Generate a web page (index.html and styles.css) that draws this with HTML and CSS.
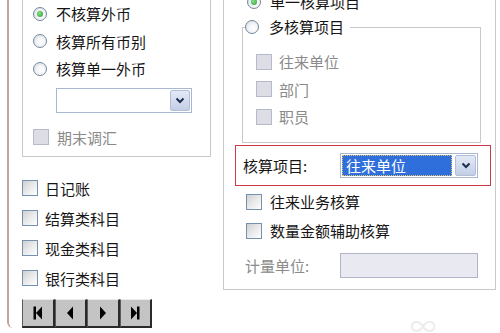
FILE: index.html
```html
<!DOCTYPE html>
<html>
<head>
<meta charset="utf-8">
<link rel="stylesheet" href="styles.css">
</head>
<body>
<div class="frame">
  <div class="left">
    <div class="lbox">
      <div class="opt"><span class="radio on"></span><span>不核算外币</span></div>
      <div class="opt"><span class="radio"></span><span>核算所有币别</span></div>
      <div class="opt"><span class="radio"></span><span>核算单一外币</span></div>
      <div class="select sel-left">
        <span class="field"></span>
        <span class="drop"><svg width="10" height="7" viewBox="0 0 10 7"><path d="M1.5 1.5 L5 5 L8.5 1.5" fill="none" stroke="#1f2f4f" stroke-width="2"/></svg></span>
      </div>
      <div class="crow dis chk-in"><span class="check"></span><span>期末调汇</span></div>
    </div>
    <div class="list">
      <div class="crow"><span class="check"></span><span>日记账</span></div>
      <div class="crow"><span class="check"></span><span>结算类科目</span></div>
      <div class="crow"><span class="check"></span><span>现金类科目</span></div>
      <div class="crow"><span class="check"></span><span>银行类科目</span></div>
    </div>
    <div class="nav">
      <span class="nbtn"><svg width="12" height="14" viewBox="0 0 12 14"><rect x="1.5" y="0.5" width="2.5" height="13" fill="#000"/><path d="M10 0.5 L4 7 L10 13.5 Z" fill="#000"/></svg></span>
      <span class="nbtn"><svg width="12" height="14" viewBox="0 0 12 14"><path d="M9 0.5 L3 7 L9 13.5 Z" fill="#000"/></svg></span>
      <span class="nbtn"><svg width="12" height="14" viewBox="0 0 12 14"><path d="M3 0.5 L9 7 L3 13.5 Z" fill="#000"/></svg></span>
      <span class="nbtn"><svg width="12" height="14" viewBox="0 0 12 14"><path d="M2 0.5 L8 7 L2 13.5 Z" fill="#000"/><rect x="8" y="0.5" width="2.5" height="13" fill="#000"/></svg></span>
    </div>
  </div>
  <div class="right">
    <div class="rbox">
      <div class="opt top"><span class="radio on"></span><span>单一核算项目</span></div>
      <fieldset class="multi">
        <legend><span class="leg"><span class="radio"></span><span>多核算项目</span></span></legend>
        <div class="crow dis in"><span class="check"></span><span>往来单位</span></div>
        <div class="crow dis in"><span class="check"></span><span>部门</span></div>
        <div class="crow dis in"><span class="check"></span><span>职员</span></div>
      </fieldset>
      <div class="focusbox">
        <span class="lab">核算项目:</span>
        <div class="select sel-right">
          <span class="hl"><span>往来单位</span></span>
          <span class="drop"><svg width="10" height="7" viewBox="0 0 10 7"><path d="M1.5 1.5 L5 5 L8.5 1.5" fill="none" stroke="#1f2f4f" stroke-width="2"/></svg></span>
        </div>
      </div>
      <div class="after">
        <div class="crow r2"><span class="check"></span><span>往来业务核算</span></div>
        <div class="crow r2"><span class="check"></span><span>数量金额辅助核算</span></div>
      </div>
      <div class="unit">
        <span class="lab2">计量单位:</span>
        <span class="input"></span>
      </div>
    </div>
  </div>
</div>
<span class="mark">∞</span>
</body>
</html>
```

FILE: styles.css
```css
html, body {
  margin: 0;
  padding: 0;
}
body {
  width: 500px;
  height: 333px;
  overflow: hidden;
  background: #ffffff;
  font-family: "Noto Sans CJK SC", "Noto Sans", sans-serif;
  font-size: 15px;
  color: #161616;
  position: relative;
}
.frame {
  display: flex;
  margin-left: 7px;
  height: 328px;
  border-left: 2px solid #c6a39b;
  border-bottom-left-radius: 6px;
  padding-left: 13px;
  box-sizing: border-box;
}
.left {
  width: 189px;
  display: flex;
  flex-direction: column;
}
.lbox {
  height: 157px;
  box-sizing: border-box;
  border: 1px solid #c9c9c9;
  border-top: none;
  padding-left: 10px;
}
.opt {
  display: flex;
  align-items: center;
  height: 27.5px;
  gap: 9px;
  line-height: 1;
}
.radio {
  width: 14px;
  height: 14px;
  box-sizing: border-box;
  border-radius: 50%;
  border: 1.5px solid #74879a;
  background: radial-gradient(circle at 60% 60%, #ffffff 0%, #f1f3f6 45%, #d2d8e0 100%);
  display: flex;
  align-items: center;
  justify-content: center;
  flex: none;
}
.radio.on::after {
  content: "";
  width: 6px;
  height: 6px;
  border-radius: 50%;
  background: radial-gradient(circle at 40% 40%, #86e486, #27952b);
}
.select {
  display: flex;
  box-sizing: border-box;
  border: 1px solid #a9b7d2;
  background: #ffffff;
  padding: 1px;
}
.sel-left {
  margin-top: 5.5px;
  margin-left: 23px;
  width: 136px;
  height: 25px;
}
.field {
  flex: 1;
}
.drop {
  width: 20px;
  box-sizing: border-box;
  border: 1px solid #b3bfd9;
  border-radius: 2px;
  background: linear-gradient(#e3e9f6, #c3cee6);
  display: flex;
  align-items: center;
  justify-content: center;
  flex: none;
}
.crow {
  display: flex;
  align-items: center;
  height: 30px;
  gap: 7px;
  line-height: 1;
}
.check {
  width: 16px;
  height: 16px;
  box-sizing: border-box;
  border: 1.5px solid #7590b0;
  background: linear-gradient(135deg, #cfcfcf 0%, #eaeaea 50%, #ffffff 100%);
  flex: none;
}
.dis {
  color: #8a8a8a;
}
.dis .check {
  border: 1px solid #b7bacb;
  background: #dcdde5;
}
.chk-in {
  margin-top: 16px;
  height: 16px;
  gap: 8px;
}
.list {
  margin-top: 16px;
}
.nav {
  margin-top: 6px;
  display: flex;
  width: 130px;
  height: 29px;
}
.nbtn {
  flex: 1;
  box-sizing: border-box;
  background: #c4c4c4;
  border-top: 1px solid #ececec;
  border-left: 1px solid #5a5a5a;
  border-right: 2px solid #2a2a2a;
  border-bottom: 2px solid #2a2a2a;
  display: flex;
  align-items: center;
  justify-content: center;
}
.right {
  width: 273px;
  margin-left: 12px;
}
.rbox {
  height: 290px;
  box-sizing: border-box;
  border: 1px solid #c9c9c9;
  border-top: none;
  display: flex;
  flex-direction: column;
}
.top {
  margin-top: -6px;
  height: 15px;
  margin-left: 23px;
}
.multi {
  margin: 8px 0 0 18px;
  width: 239px;
  box-sizing: border-box;
  border: 1px solid #c9c9c9;
  padding: 11px 0 11px 0;
  min-inline-size: 0;
}
.multi legend {
  margin-left: 2px;
  padding: 0 6px 0 0;
  height: 20px;
  line-height: 20px;
}
.leg {
  display: flex;
  align-items: center;
  height: 20px;
  gap: 10px;
}
.in {
  margin-left: 13px;
  height: 27.5px;
}
.focusbox {
  margin: 2px 0 0 11px;
  width: 256px;
  height: 41px;
  box-sizing: border-box;
  border: 1px solid #cd3a48;
  display: flex;
  align-items: center;
  padding-left: 7px;
}
.lab {
  width: 97px;
  flex: none;
}
.sel-right {
  width: 138px;
  height: 25px;
  gap: 3px;
}
.hl {
  width: 110px;
  box-sizing: border-box;
  background: #2f6fdb;
  border: 1px dotted #e7c46a;
  color: #ffffff;
  display: flex;
  align-items: center;
  padding-left: 3px;
  line-height: 1;
}
.sel-right .drop {
  width: 21px;
}
.after {
  margin-top: 1.5px;
}
.r2 {
  margin-left: 22px;
  height: 29px;
  gap: 8px;
}
.unit {
  margin: 8px 0 0 21px;
  height: 25px;
  display: flex;
  align-items: center;
  color: #8a8a8a;
}
.lab2 {
  width: 95px;
  flex: none;
}
.input {
  width: 138px;
  height: 25px;
  box-sizing: border-box;
  border: 1px solid #b4b4c8;
  background: #e9e9f1;
}
.mark {
  position: absolute;
  left: 410px;
  top: 312px;
  font-size: 26px;
  color: #ececec;
  line-height: 1;
}
```
